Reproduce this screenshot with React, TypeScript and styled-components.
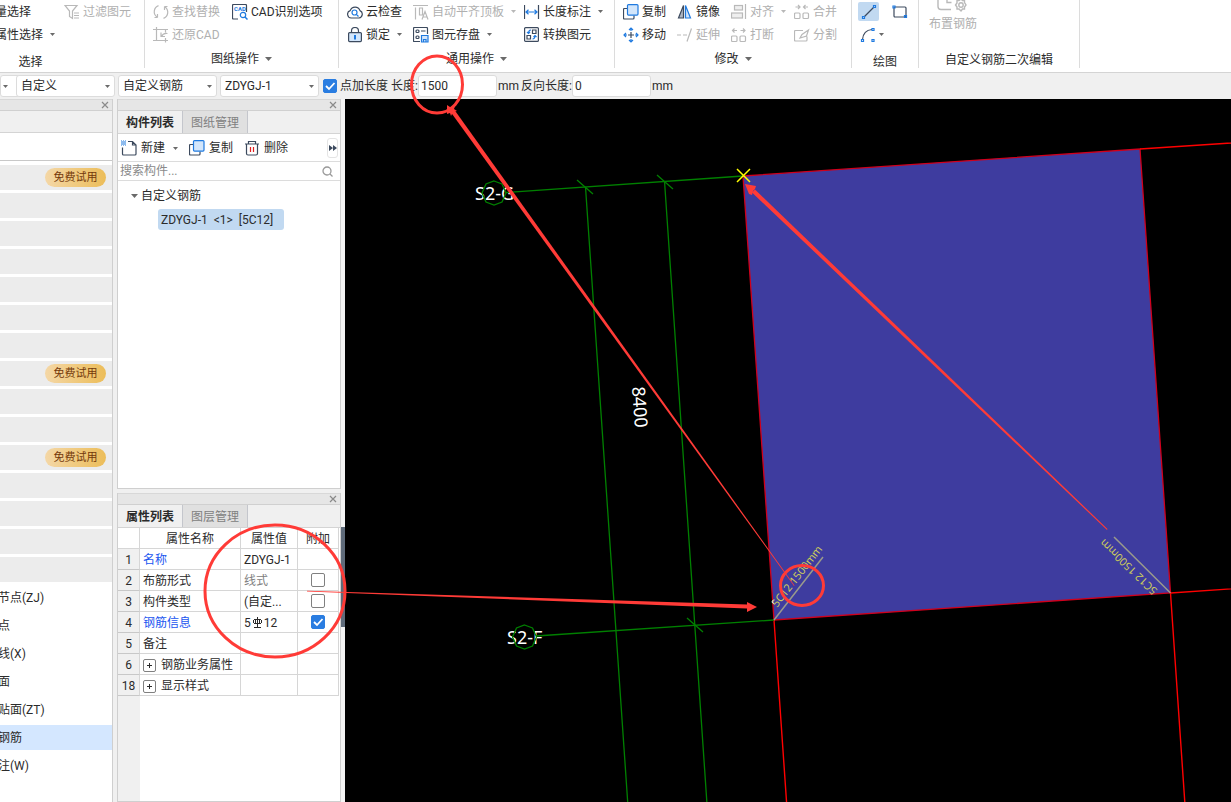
import React, { ReactNode } from "react";
import styled, { createGlobalStyle, css } from "styled-components";

const INK = "#2b2b2b";
const MUTED = "#b0b0b0";
const BLUE = "#1f7ae0";
const STEEL = "#3c4a5e";
const GREEN = "#008000";
const MARK = "#ff3b37";

const GlobalStyle = createGlobalStyle`
  * { box-sizing: border-box; }
  body {
    margin: 0;
    background: #f0f0f0;
    color: ${INK};
    font: 12px/16px Roboto, "Noto Sans CJK SC", sans-serif;
  }
  button, input, select { font: inherit; color: inherit; }
  svg { display: block; flex: none; }
`;

const Page = styled.div`
  position: relative;
  display: flex;
  flex-direction: column;
  min-height: 100vh;
  overflow: hidden;
`;

/* ---------- Ribbon ---------- */

const Ribbon = styled.header`
  display: flex;
  height: 73px;
  padding-bottom: 4px;
  background: #fff;
  border-bottom: 1px solid #d4d4d4;
  overflow: hidden;
`;

const Group = styled.section<{ $w: number; $offset?: number }>`
  display: flex;
  flex-direction: column;
  flex: none;
  width: ${(p) => p.$w}px;
  margin-left: ${(p) => p.$offset ?? 0}px;
  border-right: 1px solid #dcdcdc;
`;

const Tools = styled.div<{ $cols: string; $pad: number }>`
  display: grid;
  grid-template-columns: ${(p) => p.$cols};
  grid-auto-rows: 23px;
  height: 46px;
  padding-left: ${(p) => p.$pad}px;
`;

const ToolButton = styled.button`
  display: flex;
  align-items: center;
  gap: 3px;
  padding: 0;
  border: 0;
  background: none;
  white-space: nowrap;
  justify-self: start;
  &:disabled { color: ${MUTED}; }
`;

const CaretBox = styled.span`
  display: flex;
  padding-left: 4px;
`;

const GroupLabel = styled.div<{ $plain?: boolean }>`
  display: flex;
  align-items: center;
  justify-content: center;
  gap: 6px;
  flex: 1;
  padding-top: ${(p) => (p.$plain ? 8 : 4)}px;
`;

const DrawTools = styled.div`
  display: grid;
  grid-template-columns: 31px 31px;
  grid-auto-rows: 23px;
  height: 46px;
  padding-left: 6px;
`;

const DrawButton = styled.button<{ $on?: boolean; $menu?: boolean }>`
  display: flex;
  align-items: center;
  justify-content: center;
  gap: 3px;
  width: ${(p) => (p.$menu ? 28 : 21)}px;
  height: 19px;
  margin-top: 2px;
  padding: 0;
  border: 0;
  border-radius: 2px;
  background: ${(p) => (p.$on ? "#c1d9f1" : "none")};
`;

const LargeTool = styled.button`
  display: flex;
  flex-direction: column;
  align-items: flex-start;
  gap: 3px;
  height: 46px;
  padding: 0 0 0 10px;
  border: 0;
  background: none;
  color: ${MUTED};
  text-align: left;
  svg { margin-left: 6px; }
`;

/* ---------- Options bar ---------- */

const OptionsBar = styled.form`
  display: flex;
  align-items: center;
  height: 26px;
  padding-bottom: 1px;
  background: #f0f0f0;
  overflow: hidden;
  white-space: nowrap;
`;

const SelectBox = styled.div<{ $w: number }>`
  position: relative;
  flex: none;
  width: ${(p) => p.$w}px;
  margin-right: 3px;
  select {
    display: block;
    width: 100%;
    height: 22px;
    padding: 0 16px 0 4px;
    appearance: none;
    border: 1px solid #dcdcdc;
    border-radius: 3px;
    background: #fff;
  }
  svg { position: absolute; right: 5px; top: 10px; pointer-events: none; }
`;

const Check = styled.input`
  flex: none;
  width: 14px;
  height: 14px;
  margin: 0;
  appearance: none;
  border: 1px solid #808080;
  border-radius: 2px;
  background: #fff;
  &:checked {
    border-color: #2a7de1;
    background: #2a7de1;
  }
`;

const CheckWrap = styled.span`
  position: relative;
  display: inline-flex;
  svg { position: absolute; inset: 0; pointer-events: none; }
`;

const CheckLabel = styled.label`
  display: flex;
  align-items: center;
  gap: 3px;
  padding: 0 3px 0 1px;
`;

const Field = styled.label`
  display: flex;
  align-items: center;
  margin-right: 2px;
  input {
    width: 79px;
    height: 22px;
    margin-right: 1px;
    padding: 0 2px;
    border: 1px solid #dcdcdc;
    border-radius: 3px;
    background: #fff;
  }
`;

/* ---------- Work area ---------- */

const Work = styled.main`
  display: flex;
  flex: 1;
  min-height: 703px;
`;

const TitleStrip = styled.div`
  display: flex;
  justify-content: flex-end;
  align-items: center;
  height: 12px;
  padding-right: 3px;
  background: #e6e6e6;
  border-top: 1px solid #d8d8d8;
  border-bottom: 1px solid #d0d0d0;
`;

const CloseButton = styled.button`
  display: flex;
  padding: 0;
  border: 0;
  background: none;
`;

const Sidebar = styled.nav`
  display: flex;
  flex-direction: column;
  flex: none;
  width: 113px;
  background: #fff;
  border-right: 1px solid #cfcfcf;
`;

const SidebarHead = styled.div`
  height: 22px;
  background: #f0f0f0;
  border-bottom: 1px solid #d4d4d4;
`;

const SidebarSearch = styled.div`
  height: 28px;
  border-bottom: 1px solid #c8c8c8;
`;

const CategoryList = styled.ul`
  display: flex;
  flex-direction: column;
  gap: 3px;
  margin: 0;
  padding: 4px 0 0;
  list-style: none;
`;

const Category = styled.li<{ $kind: "group" | "leaf" | "active" }>`
  display: flex;
  align-items: center;
  height: 25px;
  overflow: hidden;
  white-space: nowrap;
  ${(p) =>
    p.$kind === "group"
      ? css`justify-content: flex-end; padding-right: 6px; background: #ececec;`
      : css`background: ${p.$kind === "active" ? "#d4e7ff" : "#fff"};`}
  span { margin-left: -2px; }
`;

const TrialBadge = styled.button`
  width: 61px;
  height: 19px;
  padding: 0;
  border: 0;
  border-radius: 10px;
  background: linear-gradient(90deg, #f4d7a6, #ecbd59);
  color: #74390b;
  font-size: 11px;
  line-height: 18px;
`;

const Dock = styled.aside`
  display: flex;
  flex-direction: column;
  flex: none;
  gap: 4px;
  width: 224px;
  margin-left: 4px;
`;

const Panel = styled.section<{ $h?: number }>`
  display: flex;
  flex-direction: column;
  flex: ${(p) => (p.$h ? `0 0 ${p.$h}px` : "1")};
  background: #fff;
  border: 1px solid #cfcfcf;
  border-top: 0;
`;

const TabRow = styled.div`
  display: flex;
  height: 23px;
  background: #f0f0f0;
  border-bottom: 1px solid #d4d4d4;
`;

const Tab = styled.button<{ $on?: boolean }>`
  width: 65px;
  padding: 1px 0 0;
  border: 0;
  border-right: 1px solid #c4c6cc;
  background: ${(p) => (p.$on ? "#f0f0f0" : "#e0e0e0")};
  color: ${(p) => (p.$on ? INK : "#808080")};
  font-weight: ${(p) => (p.$on ? 700 : 400)};
`;

const PanelTools = styled.div`
  display: flex;
  align-items: center;
  gap: 11px;
  height: 28px;
  padding: 1px 2px 0 3px;
  border-bottom: 1px solid #dcdcdc;
  ${ToolButton} { gap: 4px; }
`;

const MoreButton = styled.button`
  display: flex;
  align-items: center;
  justify-content: center;
  width: 11px;
  height: 20px;
  margin-left: auto;
  padding: 0;
  border: 1px solid #e4e4e4;
  border-radius: 3px;
  background: #fff;
`;

const SearchRow = styled.label`
  display: flex;
  align-items: center;
  height: 19px;
  padding-right: 7px;
  border-bottom: 1px solid #dcdcdc;
  input {
    flex: 1;
    min-width: 0;
    height: 18px;
    padding: 0 2px;
    border: 0;
    outline: 0;
    background: none;
  }
  input::placeholder { color: #8a8a8a; opacity: 1; }
`;

const Tree = styled.ul`
  margin: 0;
  padding: 4px 0 0 13px;
  list-style: none;
  ul { margin: 0; padding: 3px 0 0 27px; list-style: none; }
`;

const TreeNode = styled.div`
  display: flex;
  align-items: center;
  gap: 3px;
  height: 21px;
`;

const TreeLeaf = styled.button`
  display: block;
  width: 126px;
  height: 21px;
  padding: 0 3px;
  border: 0;
  border-radius: 3px;
  background: #c1d9f1;
  text-align: left;
  white-space: pre;
`;

const PropBody = styled.div`
  flex: 1;
  background: linear-gradient(90deg, #f0f0f0 22px, #fff 22px);
`;

const PropTable = styled.table`
  width: 221px;
  table-layout: fixed;
  border-collapse: separate;
  border-spacing: 0;
  th, td {
    height: 21px;
    padding: 2px 2px 0;
    border-right: 1px solid #d6d6d6;
    border-bottom: 1px solid #d6d6d6;
    font-weight: 400;
    line-height: 16px;
    white-space: nowrap;
    overflow: hidden;
    text-align: left;
  }
  thead th { text-align: center; background: #fff; }
  tbody th { padding: 2px 0 0; text-align: center; background: #f0f0f0; border-bottom-color: #c8c8c8; }
  td:last-child { padding-top: 0; text-align: center; line-height: 0; }
`;

const PropName = styled.span<{ $link?: boolean; $dim?: boolean }>`
  display: flex;
  align-items: center;
  gap: 5px;
  padding-left: 1px;
  color: ${(p) => (p.$link ? "#1a56f0" : p.$dim ? "#808080" : INK)};
`;

const RebarText = styled.span`
  display: flex;
  align-items: center;
  gap: 1px;
`;

const Expander = styled.button`
  display: flex;
  align-items: center;
  justify-content: center;
  width: 13px;
  height: 13px;
  padding: 0;
  border: 1px solid #808080;
  border-radius: 2px;
  background: #fff;
`;

const Gutter = styled.div`
  flex: none;
  width: 4px;
  padding-top: 428px;
  background: #f4f4f4;
`;

const Grip = styled.div`
  height: 100px;
  background: #5f6b7a;
`;

const Viewport = styled.section`
  position: relative;
  flex: 1;
  min-width: 0;
  background: #000;
  font-family: "Noto Sans", "Noto Sans CJK SC", sans-serif;
  overflow: hidden;
  svg { position: absolute; left: 0; top: 0; width: 100%; height: 100%; }
`;

const Markup = styled.svg`
  position: absolute;
  left: 0;
  top: 0;
  width: 100%;
  height: 100%;
  pointer-events: none;
`;

/* ---------- Icons ---------- */

const Caret = ({ dim, small }: { dim?: boolean; small?: boolean }) => (
  <svg width={small ? 5 : 7} height={small ? 3 : 4} viewBox="0 0 7 4">
    <path d="M0 0h7L3.5 4z" fill={dim ? "#b8b8b8" : "#6a6a6a"} />
  </svg>
);

const Icon = ({ dim, children }: { dim?: boolean; children: ReactNode }) => (
  <svg width="16" height="16" viewBox="0 0 16 16" fill="none" stroke={dim ? "#b9b9b9" : STEEL} strokeWidth="1.2">
    {children}
  </svg>
);

const FilterIcon = () => (
  <Icon dim><path d="M1 1.5h12L8.5 7v7.5l-3-2V7zM10 9h5M10 11.5h5M10 14h5" /></Icon>
);
const SwapIcon = () => (
  <Icon dim>
    <path d="M5.5 1.6A6.5 6.500 0 0 0 4 13M4.500 13.500H1.500M4.500 13.500v-3.500M10.500 14.400A6.500 6.500 0 0 0 12 3M11.500 2.500h3M11.500 2.500v3.500" />
  </Icon>
);
const RestoreIcon = () => (
  <Icon dim><path d="M0 2.5h15M3.500 0v13.500M0 13.500h15M12.500 2.500v3M12.500 11v4.500M14.500 6.500c-3-.5-5 .5-6 3M8 5.500v4h4" /></Icon>
);
const CadIcon = () => (
  <Icon>
    <path d="M6 15H1.500q-1 0-1-1V1.500q0-1 1-1h12q1 0 1 1V8" />
    <text x="2" y="7" fontSize="6" fontWeight="700" fill={BLUE} stroke="none">CAD</text>
    <circle cx="11" cy="11" r="2.700" stroke={BLUE} />
    <path d="M13 13l2.500 2.500" stroke={BLUE} strokeWidth="1.500" />
  </Icon>
);
const CloudIcon = () => (
  <Icon>
    <path d="M4.200 14a3.800 3.800 0 0 1-1-7.400A5.200 5.200 0 0 1 13 6.600 3.900 3.900 0 0 1 12 14z" />
    <circle cx="7.500" cy="8.500" r="2.500" stroke={BLUE} />
    <path d="M9.300 10.300l2.200 2.200" stroke={BLUE} />
  </Icon>
);
const LockIcon = () => (
  <Icon>
    <path d="M4.500 6V4a3.500 3.500 0 0 1 7 0v2" />
    <rect x="1.600" y="5.600" width="12.800" height="9" rx="1" fill="#d3e6fb" />
    <path d="M8 8v4.500" stroke={BLUE} strokeWidth="2" />
  </Icon>
);
const AlignTopIcon = () => (
  <Icon dim><path d="M0 1.500h15M2.500 3.500v12M6.500 4v7h3V4zM9 15.500l3-8 3 8M10 13h4" /></Icon>
);
const SaveIcon = () => (
  <Icon>
    <path d="M7 14.500H1q-.5 0-.5-.5V1.500q0-1 1-1h12q1 0 1 1V7M8 4h4.500M8 8.500h2" />
    <rect x="3" y="3" width="3" height="2.500" rx="1" />
    <rect x="3" y="9" width="3" height="2.500" rx="1" />
    <path d="M8.500 8.500h6.500v6.500H8.500zM10.500 15v-2.500h2.500V15" stroke={BLUE} fill="#d3e6fb" />
  </Icon>
);
const LengthIcon = () => (
  <Icon>
    <path d="M.5 1v14M14.500 1v14" />
    <path d="M2 8h11M4.500 5.800L2 8l2.500 2.200M10.500 5.800L13 8l-2.500 2.200" stroke={BLUE} />
  </Icon>
);
const ConvertIcon = () => (
  <Icon>
    <rect x=".6" y=".6" width="13.800" height="13.800" rx="1" />
    <path d="M8.500 3H12v3.500H8.500zM3 8.500h3.500V12H3z" />
    <path d="M7 3C5 3 4.500 4.500 4.500 6.500M3 5L4.500 6.500 6 5M8.500 12c2 0 2.500-1.500 2.500-3.500M9.500 10L11 8.500l1.500 1.500" stroke={BLUE} />
  </Icon>
);
const CopyIcon = () => (
  <Icon>
    <path d="M4 4.500H1.500q-1 0-1 1V14q0 1 1 1H10q1 0 1-1v-2.500" />
    <rect x="4.500" y=".6" width="10.500" height="10.500" rx="1" stroke={BLUE} fill="#d3e6fb" />
  </Icon>
);
const MoveIcon = () => (
  <Icon>
    <path d="M8 5v6M5 8h6" />
    <path d="M8 4V1M6 3l2-2 2 2M8 12v3M6 13l2 2 2-2M4 8H1M3 6L1 8l2 2M12 8h3M13 6l2 2-2 2" stroke={BLUE} />
  </Icon>
);
const MirrorIcon = () => (
  <Icon>
    <path d="M6.500 1.500v12.500H1.500z" fill="#aeb6c2" />
    <path d="M8.500 1.500v12.500h5z" stroke={BLUE} fill="#d3e6fb" />
  </Icon>
);
const ExtendIcon = () => (
  <Icon dim><path d="M0 8h4M6 8h4M10 14.500L14.500 1.500" /></Icon>
);
const AlignIcon = () => (
  <Icon dim>
    <path d="M14.500 0v15" />
    <rect x="3.500" y="1.500" width="8" height="4.500" fill="#efefef" />
    <rect x="0.500" y="9" width="11" height="5" fill="#efefef" />
  </Icon>
);
const BreakIcon = ({ join }: { join?: boolean }) => (
  <Icon dim>
    <rect x="0.500" y="9" width="5.500" height="5.500" rx="1" />
    <rect x="9" y="9" width="5.500" height="5.500" rx="1" />
    {join ? (
      <path d="M1.500 3h4M4 1l2 2-2 2M14 3h-4M11.500 1l-2 2 2 2" />
    ) : (
      <path d="M6 3.500H2M3.500 1.500l-2 2 2 2M9.500 3.500h4M12 1.500l2 2-2 2" />
    )}
  </Icon>
);
const SplitIcon = () => (
  <Icon dim><path d="M9 3.500H1.500q-1 0-1 1V13q0 1 1 1H12q1 0 1-1V9.500M6 11l2-3.500L14.500 3 12.500 9z" /></Icon>
);
const LineIcon = () => (
  <Icon>
    <path d="M3 13L13 3" />
    <path d="M1.500 12.500h2v2h-2zM12.500 1.500h2v2h-2z" stroke={BLUE} />
  </Icon>
);
const RectIcon = () => (
  <Icon>
    <rect x="2" y="3" width="12" height="10" rx="1" />
    <path d="M1 2h2v2H1zM12.500 11.500h2v2h-2z" stroke={BLUE} />
  </Icon>
);
const ArcIcon = () => (
  <Icon>
    <path d="M2.500 12.500C3 7 6 3 12 2.500" />
    <path d="M1.500 12.500h2v2h-2zM12 1.500h2v2h-2zM12 12.500h2v2h-2z" stroke={BLUE} />
  </Icon>
);
const RebarSetIcon = () => (
  <svg width="36" height="13" viewBox="0 0 36 13" fill="none" stroke="#b9b9b9" strokeWidth="1.400">
    <path d="M3 0v6.500q0 3 3 3h10M12 0v2.500h4.500" />
    <path d="M26 -1l1.500 1.500h2v2L31 5l-1.500 2v2h-2L26 11l-2-2h-2V7l-1.500-2L22 3V.500h2z" />
    <circle cx="26" cy="5" r="2.200" />
  </svg>
);
const NewIcon = () => (
  <Icon>
    <path d="M1.500 7.500V14q0 1 1 1H14q1 0 1-1V5L11.500 1.500H7M11.500 1.500V5H15" />
    <path d="M0 1h5M0 3h5M0 5h5" stroke={BLUE} strokeDasharray="1 1" />
    <path d="M1 2h4M1 4h4" stroke={BLUE} strokeDasharray="1 1" />
  </Icon>
);
const TrashIcon = () => (
  <Icon>
    <path d="M1 4h14M4.500 4V1.500h7V4M2.500 4v9.500q0 1.500 1.500 1.500h8q1.500 0 1.500-1.500V4" />
    <path d="M6.500 7v5M9.500 7v5" stroke="#e02020" />
  </Icon>
);
const CloseIcon = () => (
  <svg width="8" height="8" viewBox="0 0 8 8" stroke="#8a8a8a" strokeWidth="1.200">
    <path d="M1 1l6 6M7 1L1 7" />
  </svg>
);
const Tick = () => (
  <svg width="14" height="14" viewBox="0 0 14 14" fill="none" stroke="#fff" strokeWidth="1.800">
    <path d="M3 7l3 3 5.500-6" />
  </svg>
);

/* ---------- Parts ---------- */

interface ToolProps {
  icon: ReactNode;
  label: string;
  off?: boolean;
  menu?: boolean;
}

const Tool = ({ icon, label, off, menu }: ToolProps) => (
  <ToolButton disabled={off} type="button">
    {icon}
    {label}
    {menu && <CaretBox><Caret dim={off} small /></CaretBox>}
  </ToolButton>
);

const Select = ({ w, value, label }: { w: number; value: string; label: string }) => (
  <SelectBox $w={w}>
    <select aria-label={label} defaultValue={value}>
      <option>{value}</option>
    </select>
    <Caret small />
  </SelectBox>
);

const CheckBox = ({ on, label }: { on?: boolean; label?: string }) => (
  <CheckWrap>
    <Check type="checkbox" defaultChecked={on} aria-label={label} />
    {on && <Tick />}
  </CheckWrap>
);

const Strip = () => (
  <TitleStrip>
    <CloseButton type="button" aria-label="关闭"><CloseIcon /></CloseButton>
  </TitleStrip>
);

const TRIAL_ROWS = [0, 7, 10];
const LEAVES = ["节点(ZJ)", "点", "线(X)", "面", "贴面(ZT)", "钢筋", "注(W)"];

interface Prop {
  no: number;
  name: string;
  value?: ReactNode;
  link?: boolean;
  dim?: boolean;
  group?: boolean;
  check?: boolean;
}

const RebarValue = () => (
  <RebarText>
    5
    <svg width="11" height="15" viewBox="0 0 11 15" fill="none" stroke={INK} shapeRendering="crispEdges">
      <path d="M5.500 1v11M3.500 3v5M7.500 3v5M1.500 4v3M9.500 4v3M2 3.500h7M2 7.500h7M2 11.500h7" />
    </svg>
    12
  </RebarText>
);

const PROPS: Prop[] = [
  { no: 1, name: "名称", value: "ZDYGJ-1", link: true },
  { no: 2, name: "布筋形式", value: "线式", dim: true, check: false },
  { no: 3, name: "构件类型", value: "(自定...", check: false },
  { no: 4, name: "钢筋信息", value: <RebarValue />, link: true, check: true },
  { no: 5, name: "备注" },
  { no: 6, name: "钢筋业务属性", group: true },
  { no: 18, name: "显示样式", group: true },
];

const Drawing = () => (
  <svg role="img" aria-label="轴网">
    <g transform="translate(-345 -99)" fill="none">
      <path d="M743 176L1140 149L1170.500 593L774 620z" fill="#3e3c9f" stroke="#d0001c" strokeWidth="1.300" />
      <path
        d="M1140 149L1740 109M1170.500 593L1770 552M774 620L814 1200M1170.500 593L1212 1200"
        stroke="#ff0000"
        strokeWidth="1.400"
      />
      <g fill="#fff" fontSize="18">
        <text x="475" y="200">S2-G</text>
        <text x="507" y="644">S2-F</text>
        <text transform="translate(632 387) rotate(86)">8400</text>
      </g>
      <g stroke={GREEN} strokeWidth="1.300">
        <path d="M506 192.500L743 176M536 636L774 620" />
        <path d="M585.500 187L655 1200M664.500 181L734 1200" />
        <path d="M577 180l16 14M657 175l16 14M687 618l16 14" />
        <path d="M494 181l8 3 4 9-4 9-8 3-8-3-4-9 4-9zM524.500 625l8 3 4 9-4 9-8 3-8-3-4-9 4-9z" />
      </g>
      <g fill="#cdcd5c" fontSize="11">
        <text transform="translate(777 608) rotate(-52)">5C12 1500mm</text>
        <text transform="translate(1158 590) rotate(-136)">5C12 1500mm</text>
      </g>
      <path d="M774 620L823 557M1170.500 593L1114 537" stroke="#9a9a8c" strokeWidth="1.500" />
      <path d="M737 169l13 13M750 169l-13 13" stroke="#ffff00" strokeWidth="1.500" />
      <path d="M773.500 600q-3 1 0 3.500" stroke="#dff" />
    </g>
  </svg>
);

const RedMarkup = () => (
  <Markup aria-hidden="true">
    <g fill="none" stroke={MARK} strokeWidth="3">
      <ellipse cx="437" cy="84.500" rx="25.500" ry="28.500" />
      <ellipse cx="275" cy="591" rx="70" ry="66" />
      <ellipse cx="802" cy="585.500" rx="21.500" ry="20" />
    </g>
    <g fill={MARK}>
      <path d="M794.500 585.500L454.500 110l-3.500 2.500L794 586z" />
      <path d="M447 105l3 2 5-1-1 3 3 2-4 1-2 4-1-3-3 1z" />
      <path d="M1107.500 529L755 189.500l-3 3L1107 530z" />
      <path d="M745 184l11 2-1 3-2 2-1 4-3-1z" />
      <path d="M307 590.800L747 604.500v4L307 591.500z" />
      <path d="M757 607l-10-5v10z" />
    </g>
  </Markup>
);

export default function App() {
  return (
    <>
      <GlobalStyle />
      <Page>
        <Ribbon>
          <Group $w={228} $offset={-83}>
            <Tools $cols="69px 1fr" $pad={78}>
              <ToolButton type="button">量选择</ToolButton>
              <Tool icon={<FilterIcon />} label="过滤图元" off />
              <ToolButton type="button">属性选择<CaretBox><Caret small /></CaretBox></ToolButton>
            </Tools>
            <GroupLabel $plain>选择</GroupLabel>
          </Group>
          <Group $w={194}>
            <Tools $cols="79px 1fr" $pad={8}>
              <Tool icon={<SwapIcon />} label="查找替换" off />
              <Tool icon={<CadIcon />} label="CAD识别选项" />
              <Tool icon={<RestoreIcon />} label="还原CAD" off />
            </Tools>
            <GroupLabel>图纸操作<Caret /></GroupLabel>
          </Group>
          <Group $w={276}>
            <Tools $cols="66px 111px 1fr" $pad={8}>
              <Tool icon={<CloudIcon />} label="云检查" />
              <Tool icon={<AlignTopIcon />} label="自动平齐顶板" off menu />
              <Tool icon={<LengthIcon />} label="长度标注" menu />
              <Tool icon={<LockIcon />} label="锁定" menu />
              <Tool icon={<SaveIcon />} label="图元存盘" menu />
              <Tool icon={<ConvertIcon />} label="转换图元" />
            </Tools>
            <GroupLabel>通用操作<Caret /></GroupLabel>
          </Group>
          <Group $w={237}>
            <Tools $cols="54px 54px 63px 1fr" $pad={8}>
              <Tool icon={<CopyIcon />} label="复制" />
              <Tool icon={<MirrorIcon />} label="镜像" />
              <Tool icon={<AlignIcon />} label="对齐" off menu />
              <Tool icon={<BreakIcon join />} label="合并" off />
              <Tool icon={<MoveIcon />} label="移动" />
              <Tool icon={<ExtendIcon />} label="延伸" off />
              <Tool icon={<BreakIcon />} label="打断" off />
              <Tool icon={<SplitIcon />} label="分割" off />
            </Tools>
            <GroupLabel>修改<Caret /></GroupLabel>
          </Group>
          <Group $w={67}>
            <DrawTools>
              <DrawButton type="button" $on aria-label="直线"><LineIcon /></DrawButton>
              <DrawButton type="button" aria-label="矩形"><RectIcon /></DrawButton>
              <DrawButton type="button" $menu aria-label="弧线"><ArcIcon /><Caret small /></DrawButton>
            </DrawTools>
            <GroupLabel $plain>绘图</GroupLabel>
          </Group>
          <Group $w={161}>
            <LargeTool type="button" disabled><RebarSetIcon />布置钢筋</LargeTool>
            <GroupLabel $plain>自定义钢筋二次编辑</GroupLabel>
          </Group>
        </Ribbon>

        <OptionsBar>
          <Select w={13} value="" label="楼层" />
          <Select w={99} value="自定义" label="类别" />
          <Select w={99} value="自定义钢筋" label="构件类型" />
          <Select w={99} value="ZDYGJ-1" label="构件" />
          <CheckLabel><CheckBox on />点加长度</CheckLabel>
          <Field>长度:<input defaultValue="1500" />mm</Field>
          <Field>反向长度:<input defaultValue="0" />mm</Field>
        </OptionsBar>

        <Work>
          <Sidebar>
            <Strip />
            <SidebarHead />
            <SidebarSearch />
            <CategoryList>
              {Array.from({ length: 15 }, (_, i) => (
                <Category key={i} $kind="group">
                  {TRIAL_ROWS.includes(i) && <TrialBadge type="button">免费试用</TrialBadge>}
                </Category>
              ))}
              {LEAVES.map((name) => (
                <Category key={name} $kind={name === "钢筋" ? "active" : "leaf"}>
                  <span>{name}</span>
                </Category>
              ))}
            </CategoryList>
          </Sidebar>

          <Dock>
            <Panel $h={390}>
              <Strip />
              <TabRow>
                <Tab type="button" $on>构件列表</Tab>
                <Tab type="button">图纸管理</Tab>
              </TabRow>
              <PanelTools>
                <Tool icon={<NewIcon />} label="新建" menu />
                <Tool icon={<CopyIcon />} label="复制" />
                <Tool icon={<TrashIcon />} label="删除" />
                <MoreButton type="button" aria-label="更多">
                  <svg width="8" height="6" viewBox="0 0 8 6" fill={STEEL}>
                    <path d="M0 0l4 3-4 3zM4 0l4 3-4 3z" />
                  </svg>
                </MoreButton>
              </PanelTools>
              <SearchRow>
                <input aria-label="搜索构件" placeholder="搜索构件..." />
                <svg width="11" height="11" viewBox="0 0 11 11" fill="none" stroke="#999" strokeWidth="1.300">
                  <circle cx="5" cy="5" r="4" />
                  <path d="M8 8l2.500 2.500" />
                </svg>
              </SearchRow>
              <Tree>
                <li>
                  <TreeNode><Caret />自定义钢筋</TreeNode>
                  <ul>
                    <li><TreeLeaf type="button">{"ZDYGJ-1  <1>  [5C12]"}</TreeLeaf></li>
                  </ul>
                </li>
              </Tree>
            </Panel>

            <Panel>
              <Strip />
              <TabRow>
                <Tab type="button" $on>属性列表</Tab>
                <Tab type="button">图层管理</Tab>
              </TabRow>
              <PropBody>
                <PropTable>
                  <colgroup>
                    <col width="22" />
                    <col width="101" />
                    <col width="57" />
                    <col width="41" />
                  </colgroup>
                  <thead>
                    <tr>
                      <th aria-label="序号" />
                      <th>属性名称</th>
                      <th>属性值</th>
                      <th>附加</th>
                    </tr>
                  </thead>
                  <tbody>
                    {PROPS.map((p) => (
                      <tr key={p.no}>
                        <th scope="row">{p.no}</th>
                        <td>
                          <PropName $link={p.link}>
                            {p.group && (
                              <Expander type="button" aria-label="展开">
                                <svg width="7" height="7" viewBox="0 0 7 7" stroke={INK}>
                                  <path d="M1 3.500h5M3.500 1v5" />
                                </svg>
                              </Expander>
                            )}
                            {p.name}
                          </PropName>
                        </td>
                        <td><PropName $dim={p.dim}>{p.value}</PropName></td>
                        <td>{p.check !== undefined && <CheckBox on={p.check} label={p.name} />}</td>
                      </tr>
                    ))}
                  </tbody>
                </PropTable>
              </PropBody>
            </Panel>
          </Dock>

          <Gutter><Grip /></Gutter>
          <Viewport><Drawing /></Viewport>
        </Work>
        <RedMarkup />
      </Page>
    </>
  );
}
